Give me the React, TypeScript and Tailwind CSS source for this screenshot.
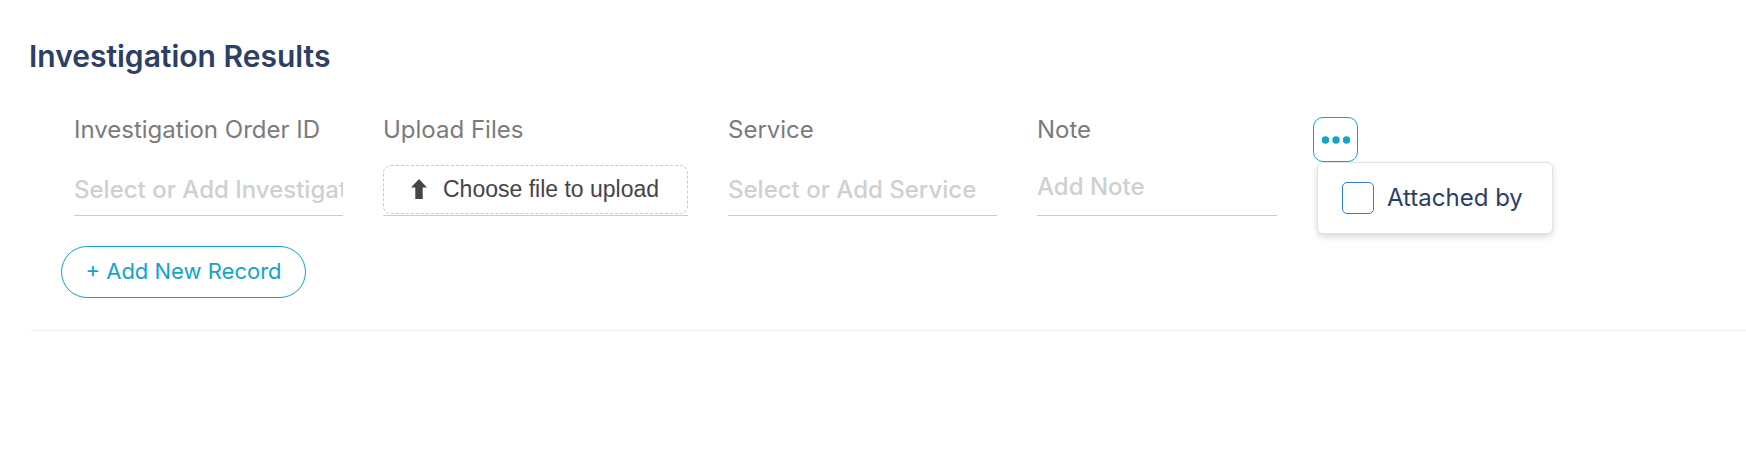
import React, { useState } from 'react';

interface FieldProps {
  id: string;
  label: string;
  className?: string;
  children: React.ReactNode;
}

const Field: React.FC<FieldProps> = ({ id, label, className = '', children }) => (
  <div className={`flex shrink-0 flex-col ${className}`}>
    <label htmlFor={id} className="h-8 text-2xl leading-8 whitespace-nowrap text-[#7b7b7d]">
      {label}
    </label>
    <div className="mt-[19px] flex h-[51px] items-start border-b border-[#cbcccc]">{children}</div>
  </div>
);

const inputClass =
  'w-full bg-transparent text-2xl leading-8 text-[#2c4066] placeholder:font-medium placeholder:text-[#cfd0d0] focus:outline-none';

const App: React.FC = () => {
  const [menuOpen, setMenuOpen] = useState(true);
  const [attachedBy, setAttachedBy] = useState(false);

  return (
    <main className="bg-white pt-9 pl-[29px] font-['Inter',sans-serif]">
      <h1 className="text-3xl leading-10 font-semibold text-[#2c4066]">Investigation Results</h1>

      <section className="ml-0.5 border-b border-[#eeeeee] pt-[38px] pb-8">
        <div className="flex items-start pl-[43px]">
          <div className="flex gap-10">
            <Field id="order" label="Investigation Order ID" className="w-[269px]">
              <input id="order" type="text" placeholder="Select or Add Investigation" className={`h-12 ${inputClass}`} />
            </Field>

            <Field id="upload" label="Upload Files" className="w-[305px]">
              <button
                id="upload"
                type="button"
                className="flex h-[49px] w-full items-center rounded-lg border border-dashed border-[#c9c9c9] pl-[27px] font-['Liberation_Sans',sans-serif] text-[23px] leading-8 whitespace-nowrap text-[#444548]"
              >
                <svg viewBox="0 0 16 20" className="mr-4 mb-0.5 h-5 w-4 shrink-0" fill="currentColor" aria-hidden="true">
                  <path d="M8 0 L16 8.5 H11.7 V20 H4.3 V8.5 H0 Z" />
                </svg>
                <span className="pb-0.5">Choose file to upload</span>
              </button>
            </Field>

            <Field id="service" label="Service" className="w-[269px]">
              <input id="service" type="text" placeholder="Select or Add Service" className={`h-12 ${inputClass}`} />
            </Field>

            <Field id="note" label="Note" className="w-[240px]">
              <input id="note" type="text" placeholder="Add Note" className={`h-[42px] ${inputClass}`} />
            </Field>
          </div>

          <div className="relative mt-[3px] ml-9">
            <button
              type="button"
              aria-label="More fields"
              aria-expanded={menuOpen}
              onClick={() => setMenuOpen(!menuOpen)}
              className="flex size-[45px] items-center justify-center rounded-[10px] border border-[#12a5c9] text-[#12a5c9]"
            >
              <svg viewBox="0 0 30 8" className="h-2 w-[30px]" fill="currentColor" aria-hidden="true">
                <circle cx="4.5" cy="4" r="3.7" />
                <circle cx="15" cy="4" r="3.7" />
                <circle cx="25.5" cy="4" r="3.7" />
              </svg>
            </button>

            {menuOpen && (
              <div className="absolute top-full left-1 flex h-[72px] w-[236px] items-center rounded-md border border-[#e2e3e4] bg-white pl-6 shadow-[0_3px_6px_rgba(0,0,0,0.15)]">
                <label className="flex items-center gap-[13px] text-2xl leading-8 whitespace-nowrap text-[#2c4066]">
                  <input
                    type="checkbox"
                    checked={attachedBy}
                    onChange={(e) => setAttachedBy(e.target.checked)}
                    className="size-8 appearance-none rounded-[5px] border border-[#2f7fd0] bg-white checked:bg-[#2f7fd0]"
                  />
                  Attached by
                </label>
              </div>
            )}
          </div>
        </div>

        <button
          type="button"
          className="mt-[30px] ml-[30px] h-[52px] w-[245px] rounded-full border border-[#12a5c9] pb-0.5 text-center text-[22px] leading-8 whitespace-nowrap text-[#12a5c9]"
        >
          + Add New Record
        </button>
      </section>
    </main>
  );
};

export default App;
